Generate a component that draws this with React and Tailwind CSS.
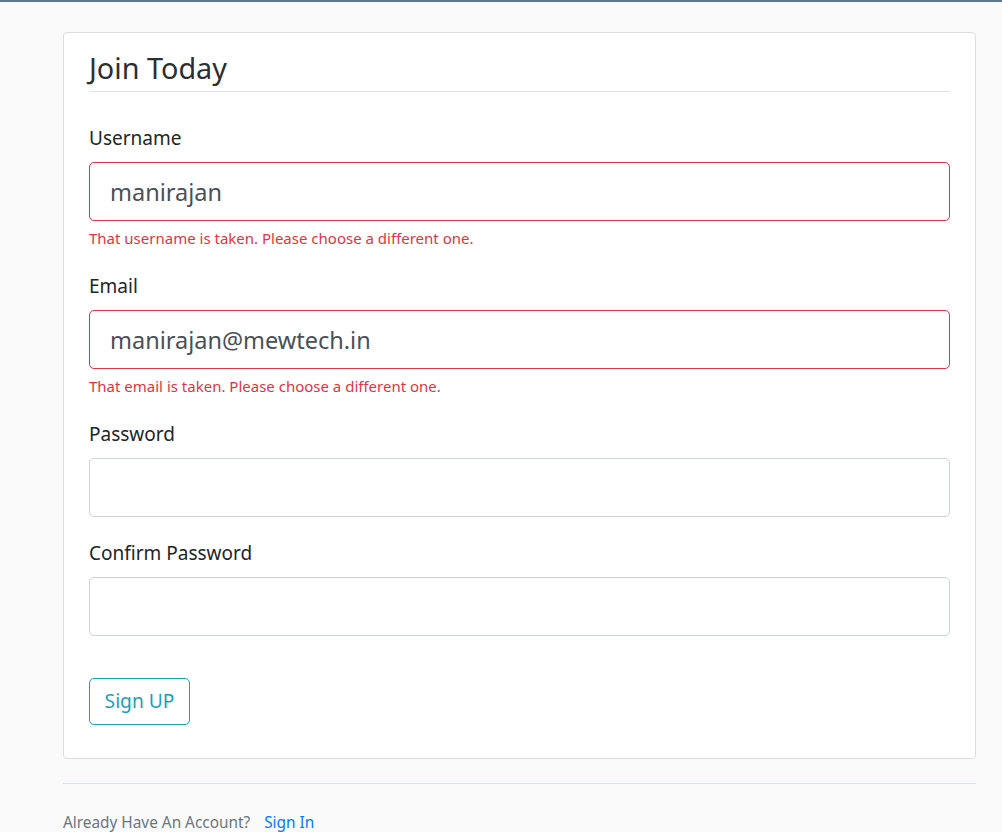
import React, { useState } from "react";

const font = { fontFamily: '"Noto Sans", "Open Sans", sans-serif' };

function Field({ label, type = "text", value, onChange, error }) {
  return (
    <div className="mb-[19px]">
      <label className="block h-[35px] mb-[6px] text-[19px] leading-[35px] text-[#212529]">
        {label}
      </label>
      <input
        type={type}
        value={value}
        onChange={onChange}
        className={`block w-full h-[59px] rounded-[5px] border bg-white px-[20px] text-[23.5px] text-[#495057] outline-none ${
          error ? "border-[#dc3545]" : "border-[#ced4da]"
        }`}
      />
      {error && (
        <div className="mt-[5px] h-[24px] text-[15px] leading-[24px] text-[#dc3545]">
          {error}
        </div>
      )}
    </div>
  );
}

export default function App() {
  const [form, setForm] = useState({
    username: "manirajan",
    email: "manirajan@mewtech.in",
    password: "",
    confirm: "",
  });

  const set = (k) => (e) => setForm((prev) => ({ ...prev, [k]: e.target.value }));

  return (
    <div className="min-h-screen bg-[#fafafa] overflow-hidden" style={font}>
      <div className="h-[2px] bg-[#5f788a]" />
      <div className="ml-[63px] w-[913px]">
        <form
          onSubmit={(e) => e.preventDefault()}
          className="mt-[30px] rounded-[4px] border border-[#dddddd] bg-white px-[25px] pt-[13px] pb-[14px]"
        >
          <div className="mb-[29px] h-[46px] border-b border-[#dee2e6] text-[28.8px] leading-[44px] text-[#2b2f33]">
            Join Today
          </div>

          <Field
            label="Username"
            value={form.username}
            onChange={set("username")}
            error="That username is taken. Please choose a different one."
          />
          <Field
            label="Email"
            value={form.email}
            onChange={set("email")}
            error="That email is taken. Please choose a different one."
          />
          <Field label="Password" type="password" value={form.password} onChange={set("password")} />
          <Field label="Confirm Password" type="password" value={form.confirm} onChange={set("confirm")} />

          <div className="pt-[23px] pb-[19px]">
            <button
              type="submit"
              className="h-[47px] w-[101px] rounded-[5px] border border-[#17a2b8] bg-transparent text-[19.2px] text-[#17a2b8]"
            >
              Sign UP
            </button>
          </div>
        </form>

        <div className="mt-[24px] border-t border-[#dee2e6] pt-[26px]">
          <small className="text-[15.36px] leading-[25px] text-[#6c757d]">
            Already Have An Account?
            <a href="#" className="ml-[14px] text-[#007bff]">
              Sign In
            </a>
          </small>
        </div>
      </div>
    </div>
  );
}
